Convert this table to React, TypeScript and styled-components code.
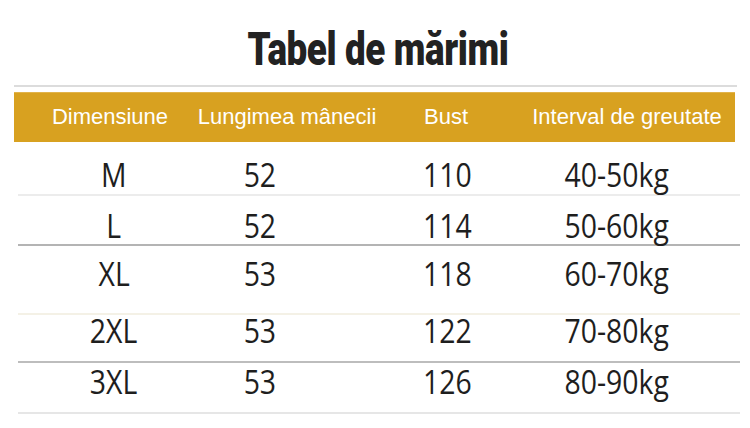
import styled, { createGlobalStyle } from "styled-components";

const GlobalStyle = createGlobalStyle`
  html, body {
    margin: 0;
    padding: 0;
    background: #ffffff;
  }
  body {
    width: 750px;
    height: 428px;
    overflow: hidden;
    font-family: "Liberation Sans", Arial, sans-serif;
  }
`;

const Page = styled.div`
  display: flex;
  flex-direction: column;
  width: 750px;
  height: 428px;
  padding-top: 27px;
  box-sizing: border-box;
`;

const Title = styled.h1`
  margin: 0;
  height: 44px;
  padding-left: 6px;
  display: flex;
  justify-content: center;
  font-family: Roboto, "Liberation Sans", sans-serif;
  font-weight: 900;
  font-size: 46px;
  line-height: 44px;
  color: #222222;
  letter-spacing: -0.5px;

  span {
    display: inline-block;
    transform: scaleX(0.8);
  }
`;

const Rule = styled.div`
  margin: 14px 13px 0 14px;
  height: 2px;
  background: #dcdcdc;
`;

const HeaderBar = styled.div`
  display: grid;
  grid-template-columns: 192px 162px 156px 206px;
  margin: 5px 15px 0 14px;
  height: 50px;
  background: #d8a120;
  box-shadow: inset 0 1px 0 #e2b34a;
`;

const HeadCell = styled.div`
  display: flex;
  align-items: center;
  justify-content: center;
  white-space: nowrap;
  font-family: "Liberation Sans", Arial, sans-serif;
  font-size: 22px;
  color: #ffffff;
`;

const Body = styled.div`
  display: flex;
  flex-direction: column;
  margin: 0 10px 0 18px;
`;

const Row = styled.div<{ $h: number; $pt: number; $line: string }>`
  display: grid;
  grid-template-columns: 192px 100px 274px 66px;
  grid-template-rows: minmax(0, 1fr);
  height: ${(p) => p.$h}px;
  box-sizing: border-box;
  border-bottom: 2px solid ${(p) => p.$line};
  padding-top: ${(p) => Math.max(0, p.$pt)}px;
  padding-bottom: ${(p) => Math.max(0, -p.$pt)}px;
`;

const Cell = styled.div`
  display: flex;
  align-items: center;
  justify-content: center;
  min-height: 0;
  white-space: nowrap;
  font-family: "Open Sans", "Noto Sans", sans-serif;
  font-size: 33px;
  color: #1e1e1e;

  span {
    display: inline-block;
    transform: scaleX(0.86);
  }
`;

const headers = ["Dimensiune", "Lungimea mânecii", "Bust", "Interval de greutate"];

// $h includes the 2px bottom rule; $pt moves the text down (+) or up (-)
const rows = [
  { size: "M", sleeve: "52", bust: "110", weight: "40-50kg", h: 54, pt: 13, line: "#ececec" },
  { size: "L", sleeve: "52", bust: "114", weight: "50-60kg", h: 50, pt: 10, line: "#b4b4b4" },
  { size: "XL", sleeve: "53", bust: "118", weight: "60-70kg", h: 69, pt: -13, line: "#f4f1e6" },
  { size: "2XL", sleeve: "53", bust: "122", weight: "70-80kg", h: 48, pt: -16, line: "#bdbdbd" },
  { size: "3XL", sleeve: "53", bust: "126", weight: "80-90kg", h: 51, pt: -12, line: "#e6e6e6" },
];

const App = () => {
  return (
    <Page>
      <GlobalStyle />
      <Title>
        <span>Tabel de mărimi</span>
      </Title>
      <Rule />
      <HeaderBar>
        {headers.map((h) => (
          <HeadCell key={h}>{h}</HeadCell>
        ))}
      </HeaderBar>
      <Body>
        {rows.map((r) => (
          <Row key={r.size} $h={r.h} $pt={r.pt} $line={r.line}>
            <Cell>
              <span>{r.size}</span>
            </Cell>
            <Cell>
              <span>{r.sleeve}</span>
            </Cell>
            <Cell>
              <span>{r.bust}</span>
            </Cell>
            <Cell>
              <span>{r.weight}</span>
            </Cell>
          </Row>
        ))}
      </Body>
    </Page>
  );
};

export default App;
